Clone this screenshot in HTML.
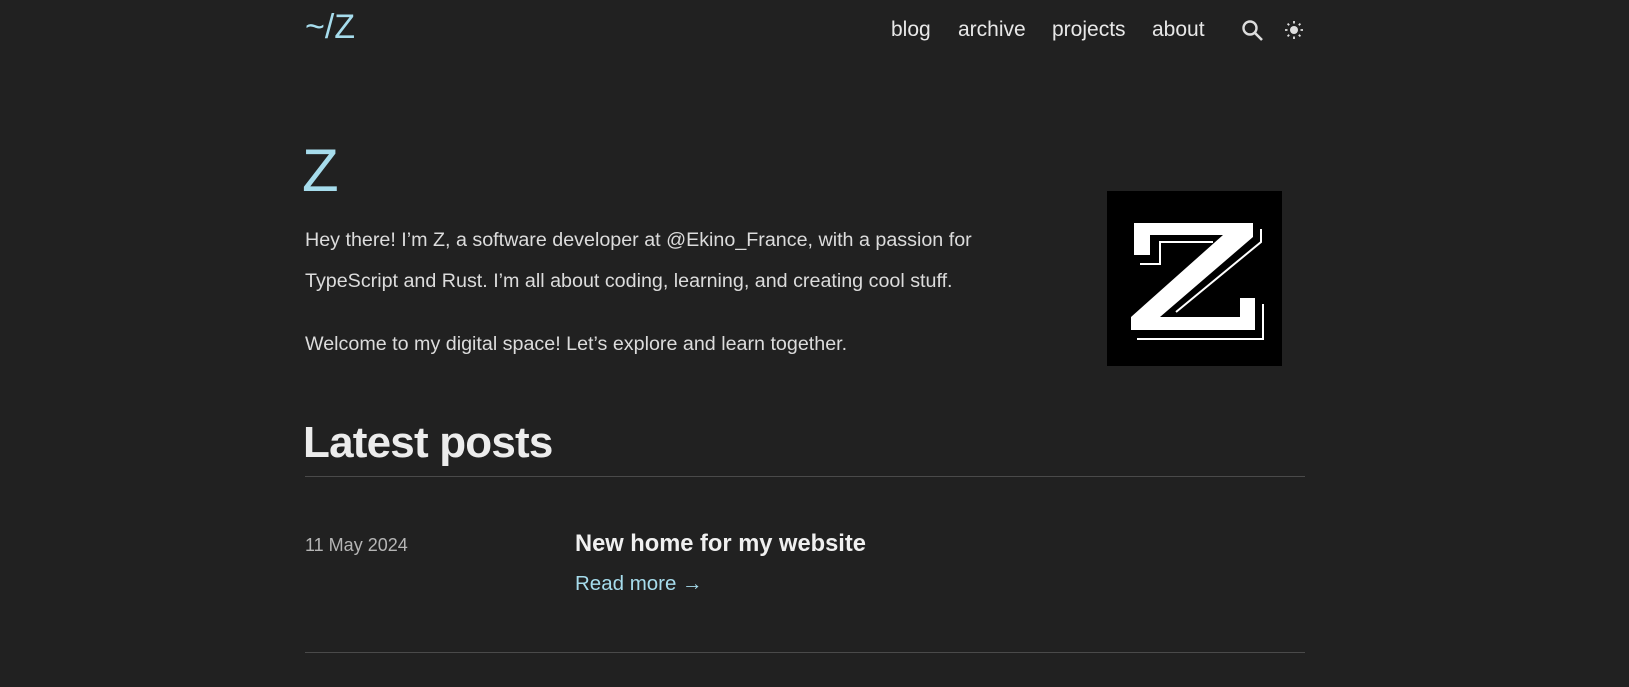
<!DOCTYPE html>
<html><head><meta charset="utf-8"><style>
html,body{margin:0;padding:0;background:#212121;width:1629px;height:687px;overflow:hidden;font-family:"Liberation Sans",sans-serif;color:#e6e6e6}
.a{position:absolute;white-space:nowrap}
.blue{color:#a6dcec}
.nav{font-size:21px;color:#e8e8e8;top:18px}
p{margin:0}
.para{font-size:19.7px;color:#dcdcdc;left:305px}
.rule{position:absolute;left:305px;width:1000px;height:1px;background:#4a4a4a}
</style></head><body>
<div class="a blue" style="left:305px;top:8px;font-size:34px">~/Z</div>
<div class="a nav" style="left:891px">blog</div>
<div class="a nav" style="left:958px">archive</div>
<div class="a nav" style="left:1052px">projects</div>
<div class="a nav" style="left:1152px">about</div>
<svg class="a" style="left:1240px;top:18px" width="26" height="26" viewBox="0 0 26 26"><circle cx="10" cy="10" r="6.5" fill="none" stroke="#ddd" stroke-width="2.4"/><path d="M15 15 L22 22" stroke="#ddd" stroke-width="2.6"/></svg>
<svg class="a" style="left:1284px;top:20px" width="20" height="20" viewBox="0 0 20 20"><circle cx="10" cy="10" r="4" fill="#ddd"/><g stroke="#ddd" stroke-width="1.8"><path d="M10 1v2.5M10 16.5V19M1 10h2.5M16.5 10H19M3.6 3.6l1.6 1.6M14.8 14.8l1.6 1.6M3.6 16.4l1.6-1.6M14.8 5.2l1.6-1.6"/></g></svg>
<div class="a blue" style="left:302px;top:136px;font-size:60px">Z</div>
<div class="a para" style="top:229px">Hey there! I’m Z, a software developer at @Ekino_France, with a passion for</div>
<div class="a para" style="top:270px">TypeScript and Rust. I’m all about coding, learning, and creating cool stuff.</div>
<div class="a para" style="top:333px">Welcome to my digital space! Let’s explore and learn together.</div>
<svg class="a" style="left:1107px;top:191px" width="175" height="175" viewBox="0 0 175 175"><rect width="175" height="175" fill="#000"/>
<path d="M27 32 H146 V46 L53 126 H133 V107 H148 V139 H24 V126 L116 44 H43 V64 H27 Z" fill="#fff"/>
<path d="M33 73 H53 V51 H106" stroke="#fff" stroke-width="2" fill="none"/>
<path d="M154 38 V51 L69 121" stroke="#fff" stroke-width="2" fill="none"/>
<path d="M156 113 V148 H30" stroke="#fff" stroke-width="2" fill="none"/>
</svg>
<div class="a" style="left:303px;top:418px;font-size:44px;font-weight:bold;color:#ececec;letter-spacing:-0.8px">Latest posts</div>
<div class="rule" style="top:476px"></div>
<div class="a" style="left:305px;top:535px;font-size:18px;color:#b5b5b5">11 May 2024</div>
<div class="a" style="left:575px;top:531px;font-size:23.7px;font-weight:bold;color:#f0f0f0">New home for my website</div>
<div class="a blue" style="left:575px;top:572px;font-size:20.5px">Read more →</div>
<div class="rule" style="top:652px"></div>
</body></html>
